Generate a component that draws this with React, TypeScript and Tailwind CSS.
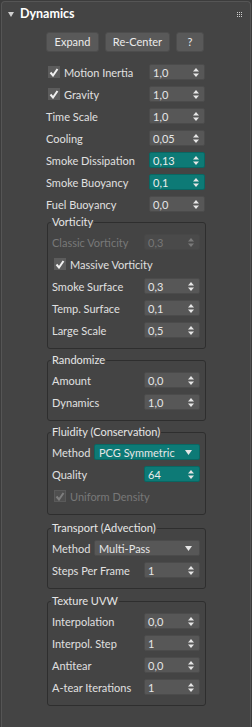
import React from "react";

function Arrows({ dim }: { dim?: boolean }) {
  return (
    <svg width="6" height="9" viewBox="0 0 6 9" className="shrink-0">
      <path d="M3 0 L6 3.5 L0 3.5 Z" fill={dim ? "#7a7a7a" : "#e6e6e6"} />
      <path d="M0 5.5 L6 5.5 L3 9 Z" fill={dim ? "#7a7a7a" : "#e6e6e6"} />
    </svg>
  );
}

function Spinner({ value, teal, disabled }: { value: string; teal?: boolean; disabled?: boolean }) {
  const cls = teal
    ? "bg-[#0d7a76] border-[#0a6662] text-[#ececec]"
    : disabled
    ? "bg-[#4a4a4a] border-[#474747] text-[#777777]"
    : "bg-[#575757] border-[#4b4b4b] text-[#e6e6e6]";
  return (
    <div className={`w-[56px] h-[16px] shrink-0 rounded-[2px] border ${cls} flex items-center justify-between pl-[3px] pr-[5px]`}>
      <span className="leading-none whitespace-nowrap">{value}</span>
      <Arrows dim={disabled} />
    </div>
  );
}

function Dropdown({ value, teal }: { value: string; teal?: boolean }) {
  const cls = teal ? "bg-[#0d7a76] border-[#0a6662]" : "bg-[#575757] border-[#4b4b4b]";
  return (
    <div className={`w-[106px] h-[16px] shrink-0 rounded-[2px] border ${cls} flex items-center justify-between pl-[4px] pr-[7px] text-[#e6e6e6]`}>
      <span className="leading-none whitespace-nowrap">{value}</span>
      <svg width="7" height="5" viewBox="0 0 7 5">
        <path d="M0 0 L7 0 L3.5 5 Z" fill="#e6e6e6" />
      </svg>
    </div>
  );
}

function Check({ disabled }: { disabled?: boolean }) {
  return (
    <div className={`w-[12px] h-[12px] shrink-0 flex items-center justify-center ${disabled ? "bg-[#4f4f4f] border border-[#5a5a5a]" : "bg-[#5c5c5c]"}`}>
      <svg width="10" height="9" viewBox="0 0 10 9">
        <path d="M1.5 4.5 L4 7.5 L8.5 1" stroke={disabled ? "#7e7e7e" : "#f0f0f0"} strokeWidth="2" fill="none" />
      </svg>
    </div>
  );
}

function Row({ label, value, teal, disabled }: { label: string; value: string; teal?: boolean; disabled?: boolean }) {
  return (
    <div className="h-[16px] flex items-center justify-between">
      <span className={`leading-none whitespace-nowrap ${disabled ? "text-[#787878]" : "text-[#e0e0e0]"}`}>{label}</span>
      <Spinner value={value} teal={teal} disabled={disabled} />
    </div>
  );
}

function CheckRow({ label, value }: { label: string; value: string }) {
  return (
    <div className="h-[16px] flex items-center justify-between">
      <div className="flex items-center gap-[4px] pl-[2px]">
        <Check />
        <span className="leading-none whitespace-nowrap text-[#e0e0e0]">{label}</span>
      </div>
      <Spinner value={value} />
    </div>
  );
}

function Group({ title, children, className }: { title: string; children: React.ReactNode; className?: string }) {
  return (
    <div className={`relative ml-[45px] w-[159px] border border-[#2e2e2e] rounded-[3px] pt-[11px] pb-[10px] pl-[4px] pr-[5px] ${className ?? ""}`}>
      <span className="absolute left-[3px] top-[-9px] bg-[#444444] px-[1px] leading-[16px] whitespace-nowrap text-[#e6e6e6]">{title}</span>
      <div className="flex flex-col gap-[6px]">{children}</div>
    </div>
  );
}

function Btn({ children, w }: { children: React.ReactNode; w: string }) {
  return (
    <div className={`${w} h-[20px] rounded-[3px] bg-[#595959] border border-[#4d4d4d] flex items-center justify-center text-[#ececec] whitespace-nowrap`}>
      {children}
    </div>
  );
}

export default function App() {
  return (
    <div className="w-[252px] h-[727px] bg-[#3c3c3c] text-[11px] overflow-hidden font-['Lato',sans-serif]">
      <div className="mx-[1px] mt-[1px] h-[726px] bg-[#444444] border-t border-l border-r border-[#555555] rounded-t-[4px]">
        <div className="h-[25px] flex items-center pl-[6px] pr-[8px]">
          <svg width="6" height="5" viewBox="0 0 6 5" className="mr-[6px]">
            <path d="M0 0 L6 0 L3 5 Z" fill="#cfcfcf" />
          </svg>
          <span className="font-bold text-white text-[12.5px] leading-none">Dynamics</span>
          <div className="ml-auto grid grid-cols-3 gap-[1px]">
            {Array.from({ length: 9 }).map((_, i) => (
              <div key={i} className="w-[1px] h-[1px] bg-[#cfcfcf]" />
            ))}
          </div>
        </div>
        <div className="mt-[5px] flex gap-[6px] pl-[44px]">
          <Btn w="w-[53px]">Expand</Btn>
          <Btn w="w-[65px]">Re-Center</Btn>
          <Btn w="w-[28px]">?</Btn>
        </div>
        <div className="mt-[12px] ml-[44px] w-[159px] flex flex-col gap-[6px]">
          <CheckRow label="Motion Inertia" value="1,0" />
          <CheckRow label="Gravity" value="1,0" />
          <Row label="Time Scale" value="1,0" />
          <Row label="Cooling" value="0,05" />
          <Row label="Smoke Dissipation" value="0,13" teal />
          <Row label="Smoke Buoyancy" value="0,1" teal />
          <Row label="Fuel Buoyancy" value="0,0" />
        </div>
        <Group title="Vorticity" className="mt-[10px]">
          <Row label="Classic Vorticity" value="0,3" disabled />
          <div className="h-[16px] flex items-center gap-[4px] pl-[2px]">
            <Check />
            <span className="leading-none whitespace-nowrap text-[#e0e0e0]">Massive Vorticity</span>
          </div>
          <Row label="Smoke Surface" value="0,3" />
          <Row label="Temp. Surface" value="0,1" />
          <Row label="Large Scale" value="0,5" />
        </Group>
        <Group title="Randomize" className="mt-[11px]">
          <Row label="Amount" value="0,0" />
          <Row label="Dynamics" value="1,0" />
        </Group>
        <Group title="Fluidity (Conservation)" className="mt-[11px]">
          <div className="h-[16px] flex items-center justify-between">
            <span className="leading-none text-[#e0e0e0]">Method</span>
            <Dropdown value="PCG Symmetric" teal />
          </div>
          <Row label="Quality" value="64" teal />
          <div className="h-[16px] flex items-center gap-[4px] pl-[2px]">
            <Check disabled />
            <span className="leading-none whitespace-nowrap text-[#787878]">Uniform Density</span>
          </div>
        </Group>
        <Group title="Transport (Advection)" className="mt-[13px]">
          <div className="h-[16px] flex items-center justify-between">
            <span className="leading-none text-[#e0e0e0]">Method</span>
            <Dropdown value="Multi-Pass" />
          </div>
          <Row label="Steps Per Frame" value="1" />
        </Group>
        <Group title="Texture UVW" className="mt-[12px]">
          <Row label="Interpolation" value="0,0" />
          <Row label="Interpol. Step" value="1" />
          <Row label="Antitear" value="0,0" />
          <Row label="A-tear Iterations" value="1" />
        </Group>
      </div>
    </div>
  );
}
